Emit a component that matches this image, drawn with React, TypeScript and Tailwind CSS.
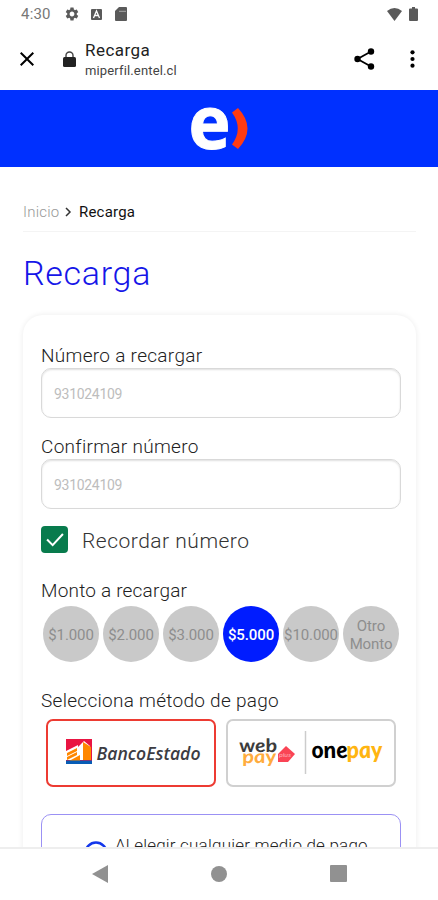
import { useState } from "react";
import { MdClose, MdSettings } from "react-icons/md";

const amounts = ["$1.000", "$2.000", "$3.000", "$5.000", "$10.000", "Otro Monto"];

const StatusBar = () => (
  <div className="flex h-7 items-center justify-between pl-[21px] pr-[20px] text-[#5a5a5a]">
    <div className="flex items-center">
      <span className="w-[43px] text-[15px] leading-none tracking-[0.2px] text-[#777]">4:30</span>
      <MdSettings size={16} />
      <svg width="11" height="11" viewBox="0 0 11 11" className="ml-[11px]">
        <rect width="11" height="11" rx="1" fill="currentColor" />
        <path d="M2.500 9 5.500 2 8.500 9M4 6.500H7" fill="none" stroke="#fff" strokeWidth="1.300" />
      </svg>
      <svg width="12" height="14" viewBox="0 0 12 14" fill="currentColor" className="ml-[13px]">
        <path d="M4 0H11Q12 0 12 1V13Q12 14 11 14H1Q0 14 0 13V4Z" />
        <path d="M4 4.300H11" stroke="#bbb" strokeWidth=".8" />
      </svg>
    </div>
    <div className="flex items-center gap-[7px]">
      <svg width="15" height="13" viewBox="0 0 15 13" fill="currentColor">
        <path d="M7.500 13 0 3Q7.500-3 15 3Z" />
      </svg>
      <svg width="9" height="14" viewBox="0 0 9 14" fill="currentColor">
        <path d="M3 0H6V1.500H8Q9 1.500 9 2.500V13Q9 14 8 14H1Q0 14 0 13V2.500Q0 1.500 1 1.500H3Z" />
      </svg>
    </div>
  </div>
);

const Toolbar = () => (
  <div className="flex h-[62px] items-center pl-[15px] pr-[23px] pb-[1px] text-black">
    <MdClose size={24} />
    <svg width="13" height="16" viewBox="0 0 13 16" className="ml-[24px]">
      <path d="M3 7V4.500A3.500 3.500 0 0 1 10 4.500V7" fill="none" stroke="#444" strokeWidth="1.400" />
      <rect y="6" width="13" height="10" rx="1.500" fill="#222" />
    </svg>
    <div className="ml-[9px] flex-1">
      <p className="mt-[4px] text-[17px] leading-[20px] tracking-[0.45px] text-[#222]">Recarga</p>
      <p className="text-[13px] leading-[21px] tracking-[0.15px] text-[#444]">miperfil.entel.cl</p>
    </div>
    <svg width="21" height="22" viewBox="0 0 21 22" fill="currentColor">
      <path d="M17 3.500 3.500 11 17 18.500" fill="none" stroke="currentColor" strokeWidth="1.800" />
      <circle cx="17" cy="3.500" r="3.200" />
      <circle cx="3.500" cy="11" r="3.200" />
      <circle cx="17" cy="18.500" r="3.200" />
    </svg>
    <svg width="5" height="18" viewBox="0 0 5 18" fill="currentColor" className="ml-[35px]">
      <circle cx="2.500" cy="2.300" r="2.100" />
      <circle cx="2.500" cy="9" r="2.100" />
      <circle cx="2.500" cy="15.700" r="2.100" />
    </svg>
  </div>
);

const EntelLogo = () => (
  <svg width="60" height="50" viewBox="0 0 60 50" className="overflow-visible">
    <text
      x="-0.5"
      y="44.5"
      textLength="42"
      lengthAdjust="spacingAndGlyphs"
      fontSize="74"
      fontWeight="700"
      fontFamily="Open Sans, sans-serif"
      fill="#fff"
      stroke="#fff"
      strokeWidth="1"
    >
      e
    </text>
    <path d="M49 4Q68 24.500 49 45L43 40.500Q54.500 24.500 43 8.500Z" fill="#ff3b12" />
  </svg>
);

type FieldProps = {
  label: string;
  value: string;
};

const Field = ({ label, value }: FieldProps) => (
  <label className="mb-[16px] block">
    <span className="block h-[25px] text-[19px] leading-[25px] font-light tracking-[0.3px] text-[#222]">
      {label}
    </span>
    <input
      placeholder={value}
      className="block h-[50px] w-full rounded-[10px] border border-[#d9d9d9] px-[12px] pt-[2px] text-[14px] tracking-[-0.3px] shadow-[inset_0_1px_2px_rgba(0,0,0,0.13)] outline-none placeholder:text-[#bdbdbd]"
    />
  </label>
);

const BancoEstado = () => (
  <svg width="138" height="28" viewBox="0 0 138 28" className="ml-[8px]">
    <path d="M0 0H26V24H0Z" fill="#e91542" />
    <path d="M0 12 12 6 12 8 18 2 24 7V21H0Z" fill="#fff" />
    <path d="M17 3 25 8V21H17Z" fill="#ff8700" />
    <path d="M1 14 11 9V12L1 17ZM1 18 11 13V16L1 21ZM3 22 14 16V22Z" fill="#ff8700" />
    <path d="M0 21.500H26V25H0Z" fill="#075cb5" />
    <text
      x="30.5"
      y="20.5"
      textLength="104"
      lengthAdjust="spacingAndGlyphs"
      fontSize="17.5"
      fontStyle="italic"
      fontWeight="600"
      fontFamily="Open Sans, sans-serif"
      fill="#3c3c43"
    >
      BancoEstado
    </text>
  </svg>
);

// The italic cut has the single-storey a; the skew sets it upright again.
const PayLogos = () => (
  <svg
    width="150"
    height="46"
    viewBox="0 0 150 46"
    fontFamily="Lato, sans-serif"
    fontStyle="italic"
    className="overflow-visible"
  >
    <g transform="translate(4 22) skewX(8)" fontSize="18.5" fontWeight="700">
      <text textLength="38" lengthAdjust="spacingAndGlyphs" fill="#3c3c3c">
        web
      </text>
    </g>
    <g transform="translate(7 32.5) skewX(8)" fontSize="18.5" fontWeight="700">
      <text textLength="34" lengthAdjust="spacingAndGlyphs" fill="#ffac3d">
        pay
      </text>
    </g>
    <path d="M42 24 50 16 59 24 52 32H42Z" fill="#fa4455" />
    <text x="43" y="27" textLength="12" lengthAdjust="spacingAndGlyphs" fontSize="6" fill="#ffadb4">
      plus
    </text>
    <path d="M69.500 1V44" stroke="#ccc" strokeWidth="1.500" />
    <g transform="translate(76.5 28) skewX(8)" fontSize="23.5" fontWeight="900">
      <text textLength="36" lengthAdjust="spacingAndGlyphs" fill="#000">
        one
      </text>
    </g>
    <g transform="translate(111.5 28) skewX(8)" fontSize="23.5" fontWeight="900">
      <text textLength="36" lengthAdjust="spacingAndGlyphs" fill="#ffb511">
        pay
      </text>
    </g>
  </svg>
);

const NavBar = () => (
  <div className="flex h-[53px] shrink-0 items-center justify-center gap-[103px] border-t-2 border-[#eee] bg-white pb-[2px] text-[#919191]">
    <svg width="16" height="18" viewBox="0 0 16 18" fill="currentColor">
      <path d="M0 9 16 0V18Z" />
    </svg>
    <span className="h-4 w-4 rounded-full bg-[#919191]" />
    <span className="h-[17px] w-[17px] rounded-[1px] bg-[#919191]" />
  </div>
);

export default function App() {
  const [amount, setAmount] = useState("$5.000");
  const [remember, setRemember] = useState(true);

  return (
    <div className="flex h-[900px] w-[438px] flex-col overflow-hidden bg-white font-['Roboto',sans-serif]">
      <div className="min-h-0 flex-1 overflow-hidden">
        <StatusBar />
        <Toolbar />
        <header className="flex h-[77px] items-center justify-center bg-[#0030ff]">
          <EntelLogo />
        </header>

        <main className="pr-[22px] pl-[23px]">
          <nav className="flex h-[65px] items-center border-b border-[#f4f4f4] pt-[26px] text-[15px] tracking-[0.2px]">
            <span className="w-[42px] font-light text-[#999]">Inicio</span>
            <svg width="7" height="10" viewBox="0 0 7 10" fill="none" stroke="#333" strokeWidth="1.500">
              <path d="M1 1 5 5 1 9" />
            </svg>
            <span className="ml-[7px] text-[#111]">Recarga</span>
          </nav>
          <h1 className="h-[83px] pt-[18px] text-[34px] leading-[46px] font-light tracking-[0.7px] text-[#1616e8]">
            Recarga
          </h1>

          <section className="h-[600px] rounded-[20px] pr-[15px] pl-[18px] pt-[28px] shadow-[0_0_5px_1px_rgba(0,0,0,0.06)]">
            <Field label="Número a recargar" value="931024109" />
            <Field label="Confirmar número" value="931024109" />
            <button onClick={() => setRemember(!remember)} className="mt-[17px] flex items-center">
              <span
                className={`flex h-[27px] w-[27px] items-center justify-center rounded-[4px] ${
                  remember ? "bg-[#087b4d]" : "border border-gray-300"
                }`}
              >
                {remember && (
                  <svg width="18" height="14" viewBox="0 0 19 15" fill="none" stroke="#fff" strokeWidth="2.200">
                    <path d="M1 7 7 13 18 1" />
                  </svg>
                )}
              </span>
              <span className="mt-[3px] ml-[14px] text-[21px] leading-[24px] font-light tracking-[0.5px] text-[#333]">
                Recordar número
              </span>
            </button>

            <p className="mt-[25px] h-[28px] text-[19px] leading-[25px] font-light tracking-[0.2px] text-[#222]">
              Monto a recargar
            </p>
            <div className="ml-[2px] flex gap-[4px]">
              {amounts.map((item) => (
                <button
                  key={item}
                  onClick={() => setAmount(item)}
                  className={`flex h-14 w-14 shrink-0 items-center justify-center rounded-full pt-[2px] text-[15px] leading-[18px] ${
                    amount === item
                      ? "bg-[#001cff] font-medium tracking-[-0.1px] text-white"
                      : "bg-[#c9c9c9] tracking-[-0.1px] text-[#8e8e8e]"
                  }`}
                >
                  {item}
                </button>
              ))}
            </div>

            <p className="mt-[26px] h-[31px] text-[19px] leading-[25px] font-light tracking-[0.28px] text-[#222]">
              Selecciona método de pago
            </p>
            <div className="ml-[5px] flex gap-[10px]">
              <button className="flex h-[68px] w-[170px] items-center justify-center rounded-[7px] border-2 border-[#ed3b32]">
                <BancoEstado />
              </button>
              <button className="flex h-[68px] w-[170px] items-center justify-center rounded-[7px] border-2 border-[#d0d0d0]">
                <PayLogos />
              </button>
            </div>

            <div className="mt-[27px] flex h-[90px] rounded-[10px] border border-[#9b91f4] pt-[19px] pl-[42px]">
              <svg width="24" height="24" viewBox="0 0 24 24" fill="none" stroke="#1236eb" strokeWidth="2.500" className="mt-[7px]">
                <circle cx="12" cy="12" r="10.500" />
                <path d="M12 11V17M12 7V8" />
              </svg>
              <p className="ml-[7px] text-[17px] leading-[22px] font-light tracking-[0.2px] whitespace-nowrap text-[#222]">
                Al elegir cualquier medio de pago
              </p>
            </div>
          </section>
        </main>
      </div>
      <NavBar />
    </div>
  );
}
